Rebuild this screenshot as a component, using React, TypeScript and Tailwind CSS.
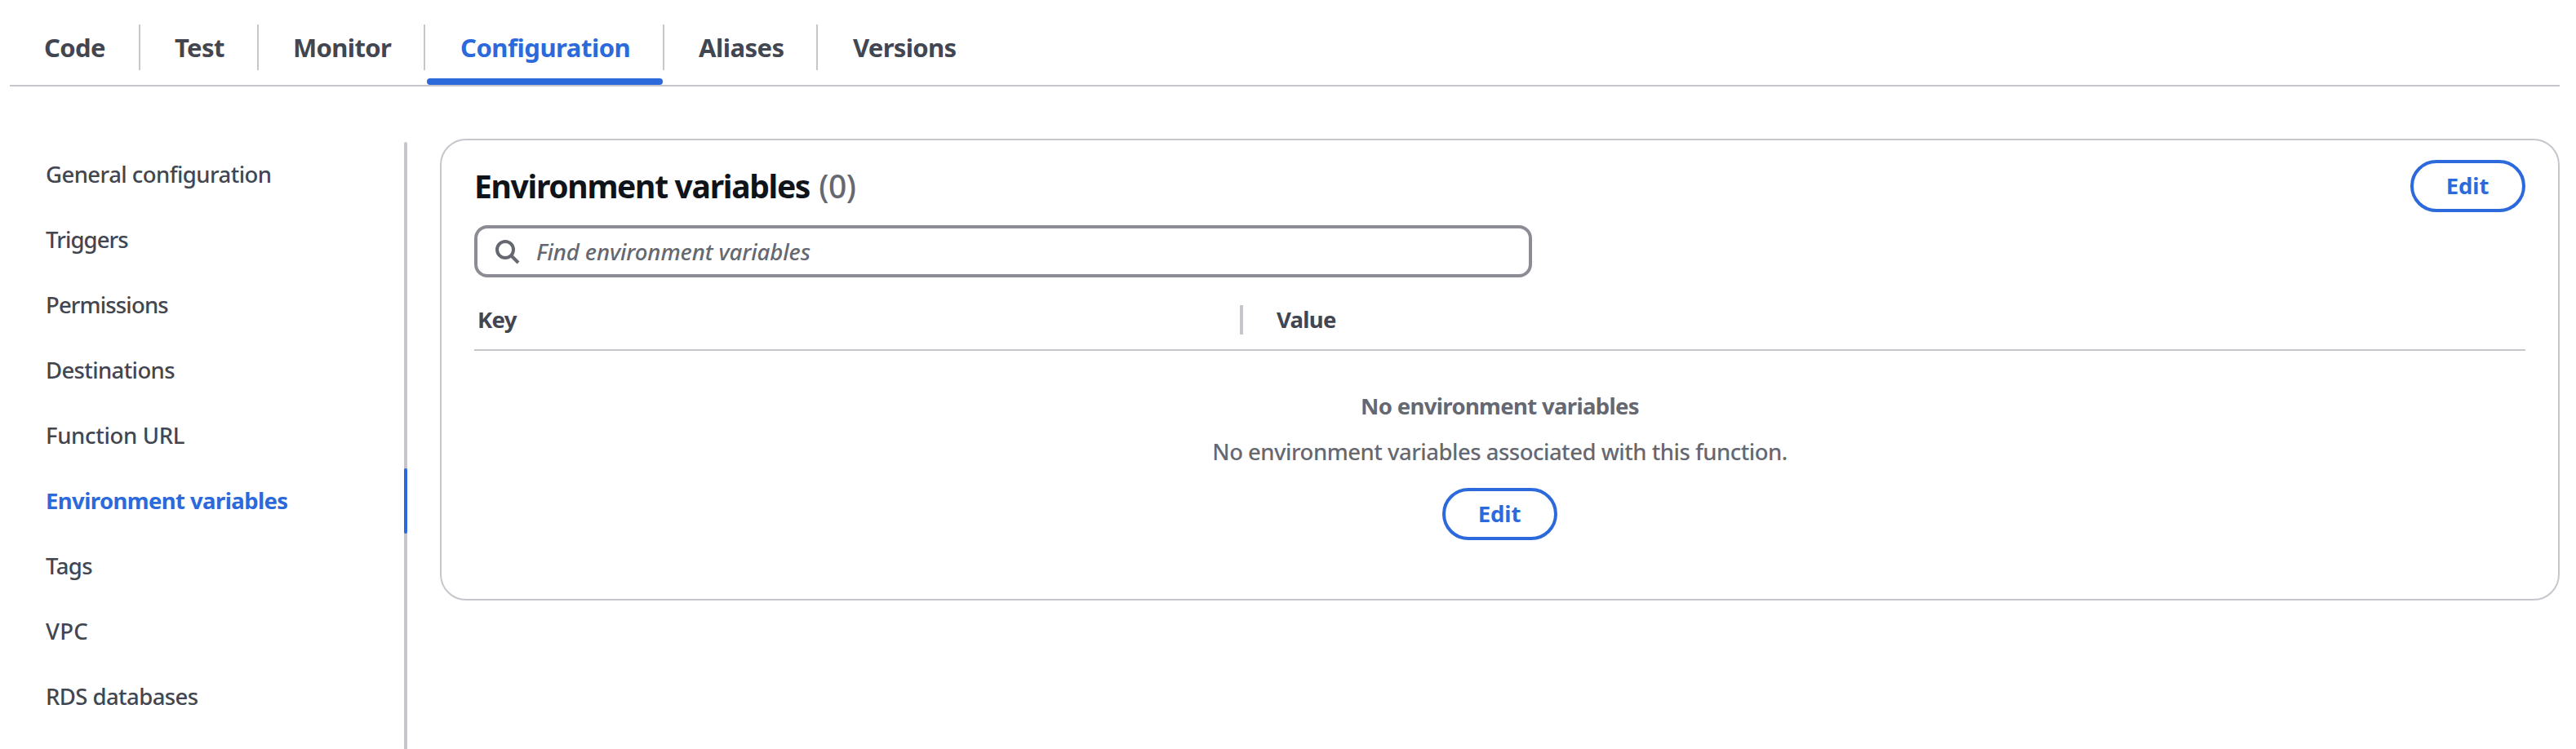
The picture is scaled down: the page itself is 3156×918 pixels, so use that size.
const tabs = [
  { label: "Code", box: "w-[160px] pl-[42px] border-r-2", text: "tracking-[-0.62px]" },
  { label: "Test", box: "w-[145px] pl-[42px] border-r-2", text: "tracking-[-0.63px]" },
  { label: "Monitor", box: "w-[204px] pl-[42px] border-r-2", text: "tracking-[-0.66px]" },
  { label: "Configuration", box: "w-[293px] pl-[43px] border-r-2", text: "tracking-[-0.48px]", active: true },
  { label: "Aliases", box: "w-[188px] pl-[42px] border-r-2", text: "tracking-[-0.52px]" },
  { label: "Versions", box: "w-[220px] pl-[43px]", text: "tracking-[-0.68px]" },
];

const navItems = [
  { label: "General configuration", text: "tracking-[-0.55px]" },
  { label: "Triggers", text: "tracking-[-0.9px]" },
  { label: "Permissions", text: "tracking-[-0.86px]" },
  { label: "Destinations", text: "tracking-[-0.64px]" },
  { label: "Function URL", text: "tracking-[-0.32px]" },
  { label: "Environment variables", text: "tracking-[-0.6px]", active: true },
  { label: "Tags", text: "tracking-[-0.6px]" },
  { label: "VPC", text: "tracking-[0.3px]" },
  { label: "RDS databases", text: "tracking-[-0.58px]" },
];

function EditButton() {
  return (
    <button
      type="button"
      className="flex h-16 w-[141px] items-center justify-center rounded-full border-4 border-[#2c69da] pr-px pb-px font-bold tracking-[-0.1px] text-[#2c69da]"
    >
      Edit
    </button>
  );
}

function Tabs() {
  return (
    <div className="ml-3 mr-5 flex h-[106px] border-b-2 border-[#c6c6cd] pt-[30px]">
      {tabs.map((tab) => (
        <div
          key={tab.label}
          className={`relative flex h-14 items-center border-[#c6c6cd] text-[31px] font-bold ${tab.box} ${
            tab.active ? "text-[#2c69da]" : "text-[#424650]"
          }`}
        >
          <span className={tab.text}>{tab.label}</span>
          {tab.active && <span className="absolute top-[66px] left-[2px] h-2 w-[289px] rounded-[4px] bg-[#2c69da]" />}
        </div>
      ))}
    </div>
  );
}

function SideNav() {
  return (
    <nav className="relative mt-[68px] ml-3 h-[744px] w-[487px] shrink-0">
      <span className="absolute inset-y-0 right-0 w-1 rounded-t-[2px] bg-[#c6c6cd]" />
      {navItems.map((item) => (
        <div key={item.label} className="relative flex h-20 items-center pb-px pl-11">
          <span className={`${item.text} ${item.active ? "font-bold text-[#2c69da]" : "font-medium text-[#424650]"}`}>
            {item.label}
          </span>
          {item.active && <span className="absolute inset-y-0 right-0 w-1 rounded-[2px] bg-[#2c69da]" />}
        </div>
      ))}
    </nav>
  );
}

function VariablesPanel() {
  return (
    <section className="mt-16 mr-5 ml-10 h-[566px] flex-1 rounded-[32px] border-2 border-[#c6c6cd] px-10 pt-6">
      <div className="flex h-16 items-center justify-between">
        <h2 className="flex gap-[11px] pt-px text-[39px]">
          <span className="font-bold tracking-[-1.3px] text-[#0f141a]">Environment variables</span>
          <span className="font-medium tracking-[-0.4px] text-[#656871]">(0)</span>
        </h2>
        <EditButton />
      </div>

      <div className="mt-4 flex h-16 w-[1296px] items-center rounded-2xl border-4 border-[#8c8c94] pl-5 text-[#656871]">
        <svg viewBox="0 0 16 16" className="size-8" fill="none" stroke="currentColor" strokeWidth="2">
          <circle cx="7" cy="7" r="5" />
          <path d="m15 15-4.5-4.5" />
        </svg>
        <span className="ml-5 pt-px font-medium tracking-[-0.1px] italic">Find environment variables</span>
      </div>

      <div className="mt-4 flex h-[74px] items-center border-b-2 border-[#c6c6cd] font-bold text-[#424650]">
        <div className="flex h-9 w-[942px] items-center border-r-4 border-[#c6c6cd] pl-1">
          <span className="tracking-[-0.7px]">Key</span>
        </div>
        <span className="ml-[41px] tracking-[-0.73px]">Value</span>
      </div>

      <div className="flex flex-col items-center pt-[47.5px] text-[#656871]">
        <p className="h-10 leading-10 font-bold tracking-[-0.67px]">No environment variables</p>
        <p className="mt-4 h-10 leading-10 font-medium tracking-[-0.5px]">
          No environment variables associated with this function.
        </p>
        <div className="mt-[24.5px]">
          <EditButton />
        </div>
      </div>
    </section>
  );
}

export default function App() {
  return (
    <div className="h-[918px] w-[3156px] overflow-hidden bg-white font-['Noto_Sans',sans-serif] text-[27.5px]">
      <Tabs />
      <div className="flex items-start">
        <SideNav />
        <VariablesPanel />
      </div>
    </div>
  );
}
